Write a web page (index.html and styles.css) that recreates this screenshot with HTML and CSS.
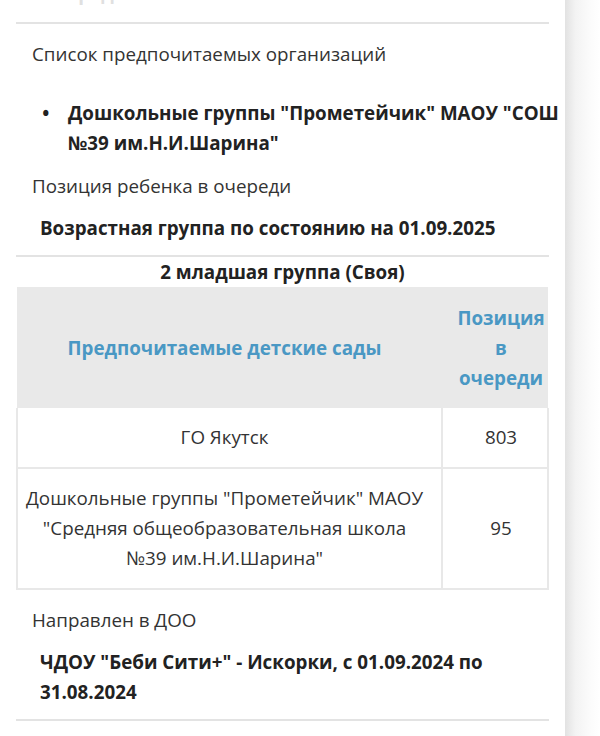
FILE: index.html
```html
<!DOCTYPE html>
<html lang="ru">
<head>
    <meta charset="UTF-8">
    <meta name="viewport" content="width=device-width, initial-scale=1.0">
    <title>Заявление</title>
    <link rel="stylesheet" href="styles.css">
</head>
<body>
    <div class="page">
        <div class="card">
            <div class="field field--cut">
                <div class="field-value">Очередь</div>
            </div>

            <div class="field">
                <div class="field-label">Список предпочитаемых организаций</div>
                <ul class="org-list">
                    <li>Дошкольные группы "Прометейчик" МАОУ "СОШ №39 им.Н.И.Шарина"</li>
                </ul>
                <div class="field-label">Позиция ребенка в очереди</div>
                <div class="field-value">Возрастная группа по состоянию на 01.09.2025</div>
            </div>

            <table class="queue-table">
                <caption>2 младшая группа (Своя)</caption>
                <thead>
                    <tr>
                        <th>Предпочитаемые детские сады</th>
                        <th class="col-pos">Позиция в очереди</th>
                    </tr>
                </thead>
                <tbody>
                    <tr>
                        <td>ГО Якутск</td>
                        <td>803</td>
                    </tr>
                    <tr>
                        <td>Дошкольные группы "Прометейчик" МАОУ "Средняя общеобразовательная школа №39 им.Н.И.Шарина"</td>
                        <td>95</td>
                    </tr>
                </tbody>
            </table>

            <div class="field">
                <div class="field-label">Направлен в ДОО</div>
                <div class="field-value">ЧДОУ "Беби Сити+" - Искорки, с 01.09.2024 по 31.08.2024</div>
            </div>
        </div>
        <div class="side"></div>
    </div>
</body>
</html>
```

FILE: styles.css
```css
body {
    margin: 0;
    background: #fff;
    color: #222;
    font-family: 'Open Sans', 'Noto Sans', sans-serif;
    font-size: 18.8px;
    line-height: 30px;
}

.page {
    display: flex;
    min-height: 736px;
}

.card {
    width: 533px;
    padding: 0 18px 0 16px;
    flex-shrink: 0;
}

.side {
    flex: 1;
    margin-left: -2px;
    background: linear-gradient(90deg, #e2e2e2 0%, #f3f3f3 30%, #fbfbfb 70%, #fff 100%);
}

.field {
    padding: 15px 0 12px;
    border-bottom: 2px solid #e3e3e3;
}

.field--cut {
    margin-top: -22px;
    padding-top: 0;
    padding-bottom: 14px;
    color: #e0e0e0;
}

.field-label {
    padding-left: 16px;
    color: #333;
}

.field-value {
    padding-left: 24px;
    font-weight: 700;
    margin-top: 12px;
}

.field--cut .field-value {
    margin-top: 0;
}

.org-list {
    margin: 29px -22px 13px 0;
    padding-left: 52px;
    font-weight: 700;
}

.org-list li::marker {
    content: "•\2003";
}

.queue-table {
    width: 100%;
    border-collapse: collapse;
    text-align: center;
}

.queue-table caption {
    font-weight: 700;
}

.queue-table th {
    background: #e9e9e9;
    color: #4a98c4;
    font-weight: 700;
    padding: 16px 14px 15px 4px;
}

.queue-table th.col-pos {
    width: 90px;
    padding: 16px 2px 15px 14px;
}

.queue-table td {
    border: 2px solid #e8e8e8;
    padding: 14px 14px 15px 4px;
    color: #333;
}

.queue-table td:last-child {
    padding: 14px 2px 15px 14px;
}

.queue-table tbody tr:first-child td {
    border-top: 0;
}
```
